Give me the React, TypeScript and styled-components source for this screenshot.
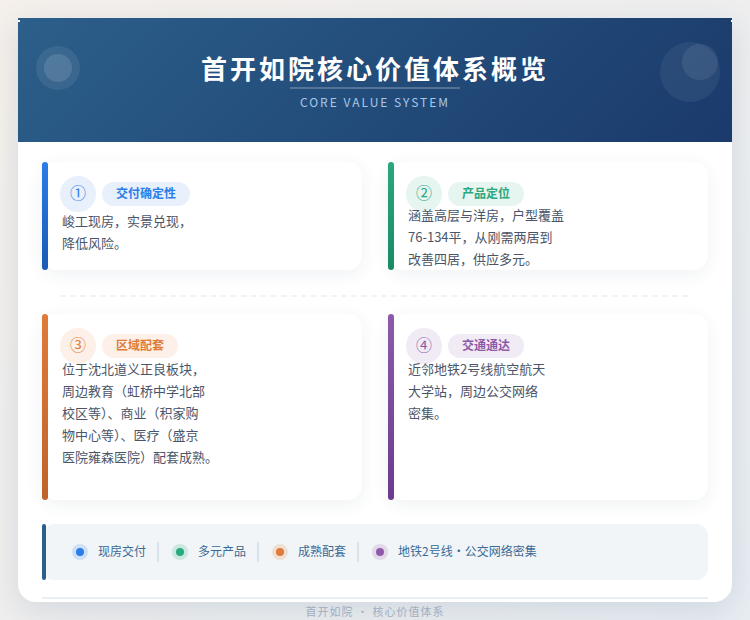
import React from "react";
import styled, { createGlobalStyle } from "styled-components";

const Global = createGlobalStyle`
  html, body { margin: 0; padding: 0; }
  body {
    width: 750px;
    height: 620px;
    overflow: hidden;
    background: linear-gradient(135deg, #f5f0eb 0%, #e8edf2 100%);
    font-family: "Noto Sans CJK SC", "Noto Sans", sans-serif;
  }
`;

const Page = styled.div`
  padding: 18px;
  height: 620px;
  box-sizing: border-box;
`;

const Sheet = styled.div`
  width: 714px;
  height: 584px;
  background: #fff;
  border-radius: 0 0 18px 18px;
  box-shadow: 0 8px 32px rgba(26, 58, 107, 0.13);
`;

const Header = styled.header`
  position: relative;
  height: 124px;
  box-sizing: border-box;
  padding-top: 31px;
  background: linear-gradient(135deg, #2c5f8a 0%, #1a3a6b 100%);
  overflow: hidden;
  text-align: center;

  &::before,
  &::after {
    content: "";
    position: absolute;
    top: 2px;
    width: 1.5px;
    height: 2px;
    background: #fff;
  }
  &::before {
    left: 0;
  }
  &::after {
    right: 0;
  }
`;

const Ring = styled.span<{ $x: number; $y: number; $d: number; $a: number }>`
  position: absolute;
  left: ${(p) => p.$x}px;
  top: ${(p) => p.$y}px;
  width: ${(p) => p.$d}px;
  height: ${(p) => p.$d}px;
  border-radius: 50%;
  background: rgba(255, 255, 255, ${(p) => p.$a});
`;

const Title = styled.h1`
  margin: 0;
  font-size: 26px;
  line-height: 38px;
  font-weight: 700;
  letter-spacing: 3px;
  color: #fff;
`;

const TitleRule = styled.div`
  width: 170px;
  height: 2px;
  margin: 0 auto;
  background: rgba(255, 255, 255, 0.22);
`;

const Subtitle = styled.div`
  margin-top: 4px;
  font-size: 12px;
  line-height: 18px;
  letter-spacing: 2px;
  color: #a8c8e8;
`;

const Body = styled.div`
  padding: 20px 24px 0;
`;

const Grid = styled.div`
  display: grid;
  grid-template-columns: 320px 320px;
  grid-template-rows: 108px 44px 186px;
  column-gap: 26px;
`;

const Divider = styled.div`
  grid-column: 1 / -1;
  align-self: start;
  margin: 25px 20px 0 18px;
  border-top: 2px dashed #f0f3f7;
`;

const Card = styled.article<{ $from: string; $to: string }>`
  position: relative;
  box-sizing: border-box;
  padding: 14px 18px 0 18px;
  background: #fff;
  border-radius: 14px;
  box-shadow: 0 4px 18px rgba(30, 60, 90, 0.07);

  &::before {
    content: "";
    position: absolute;
    left: 0;
    top: 0;
    bottom: 0;
    width: 6px;
    border-radius: 3px;
    background: linear-gradient(180deg, ${(p) => p.$from}, ${(p) => p.$to});
  }
`;

const CardHead = styled.div`
  display: flex;
  align-items: center;
  gap: 6px;
  height: 36px;
`;

const Num = styled.span<{ $bg: string; $fg: string }>`
  width: 36px;
  height: 36px;
  box-sizing: border-box;
  padding-bottom: 5px;
  border-radius: 50%;
  display: flex;
  align-items: center;
  justify-content: center;
  background: ${(p) => p.$bg};
  color: ${(p) => p.$fg};
  font-size: 16px;
  font-weight: 400;
`;

const Pill = styled.span<{ $bg: string; $fg: string }>`
  height: 24px;
  line-height: 22px;
  padding: 0 14px;
  border-radius: 12px;
  background: ${(p) => p.$bg};
  color: ${(p) => p.$fg};
  font-size: 12px;
  font-weight: 700;
`;

const CardText = styled.p<{ $shift: number }>`
  margin: ${(p) => p.$shift}px 0 0 2px;
  font-size: 13px;
  line-height: 22px;
  color: #4a5568;
`;

const Strip = styled.div`
  margin-top: 24px;
  height: 56px;
  display: flex;
  align-items: center;
  box-sizing: border-box;
  padding-left: 30px;
  background: #f1f5f8;
  border-radius: 12px;
  position: relative;

  &::before {
    content: "";
    position: absolute;
    left: 0;
    top: 0;
    bottom: 0;
    width: 4px;
    border-radius: 2px;
    background: #2c5f8a;
  }
`;

const StripItem = styled.div`
  display: flex;
  align-items: center;
  gap: 10px;
  font-size: 12px;
  line-height: 18px;
  color: #3a6a96;
`;

const StripLabel = styled.span`
  padding-bottom: 2px;
`;

const Dot = styled.span<{ $c: string; $halo: string }>`
  width: 8px;
  height: 8px;
  border-radius: 50%;
  margin: 0 4px;
  background: ${(p) => p.$c};
  box-shadow: 0 0 0 4px ${(p) => p.$halo};
`;

const Sep = styled.span`
  width: 2px;
  height: 20px;
  margin: 0 13px 0 11px;
  background: #d8e2ea;
`;

const Foot = styled.footer`
  margin-top: 17px;
  padding-top: 4px;
  border-top: 2px solid #e8eef3;
  text-align: center;
  font-size: 11px;
  line-height: 16px;
  letter-spacing: 1px;
  color: #a0aec0;
`;

const cards = [
  { n: "①", label: "交付确定性", from: "#2b7de9", to: "#1a5bb5", fg: "#2b7de9", bg: "#e8f0fb", lines: ["峻工现房，实景兑现，", "降低风险。"], shift: -2 },
  { n: "②", label: "产品定位", from: "#2aa87e", to: "#1a8a66", fg: "#2aa87e", bg: "#e6f5f0", lines: ["涵盖高层与洋房，户型覆盖", "76-134平，从刚需两居到", "改善四居，供应多元。"], shift: -8 },
  { n: "③", label: "区域配套", from: "#e07b39", to: "#c0622a", fg: "#e07b39", bg: "#fdf0e8", lines: ["位于沈北道义正良板块，", "周边教育（虹桥中学北部", "校区等）、商业（积家购", "物中心等）、医疗（盛京", "医院雍森医院）配套成熟。"], shift: -6 },
  { n: "④", label: "交通通达", from: "#8e5aa8", to: "#6c3a8e", fg: "#8e5aa8", bg: "#f0ebf5", lines: ["近邻地铁2号线航空航天", "大学站，周边公交网络", "密集。"], shift: -6 },
];

const status = [
  { t: "现房交付", c: "#2b7de9", h: "#cfe0f6" },
  { t: "多元产品", c: "#2aa87e", h: "#cbe8df" },
  { t: "成熟配套", c: "#e07b39", h: "#f0dfd3" },
  { t: "地铁2号线・公交网络密集", c: "#8e5aa8", h: "#e1d9ea" },
];

const renderCard = (c: (typeof cards)[number]) => (
  <Card key={c.n} $from={c.from} $to={c.to}>
    <CardHead>
      <Num $bg={c.bg} $fg={c.fg}>{c.n}</Num>
      <Pill $bg={c.bg} $fg={c.fg}>{c.label}</Pill>
    </CardHead>
    <CardText $shift={c.shift}>
      {c.lines.map((l, i) => (
        <React.Fragment key={l}>
          {i > 0 && <br />}
          {l}
        </React.Fragment>
      ))}
    </CardText>
  </Card>
);

export default function App() {
  return (
    <Page>
      <Global />
      <Sheet>
        <Header>
          <Ring $x={18} $y={28} $d={44} $a={0.08} />
          <Ring $x={26} $y={36} $d={28} $a={0.12} />
          <Ring $x={642} $y={24} $d={60} $a={0.06} />
          <Ring $x={664} $y={26} $d={36} $a={0.08} />
          <Title>首开如院核心价值体系概览</Title>
          <TitleRule />
          <Subtitle>CORE VALUE SYSTEM</Subtitle>
        </Header>
        <Body>
          <Grid>
            {cards.slice(0, 2).map(renderCard)}
            <Divider />
            {cards.slice(2).map(renderCard)}
          </Grid>
          <Strip>
            {status.map((s, i) => (
              <React.Fragment key={s.t}>
                {i > 0 && <Sep />}
                <StripItem>
                  <Dot $c={s.c} $halo={s.h} />
                  <StripLabel>{s.t}</StripLabel>
                </StripItem>
              </React.Fragment>
            ))}
          </Strip>
          <Foot>首开如院 · 核心价值体系</Foot>
        </Body>
      </Sheet>
    </Page>
  );
}
